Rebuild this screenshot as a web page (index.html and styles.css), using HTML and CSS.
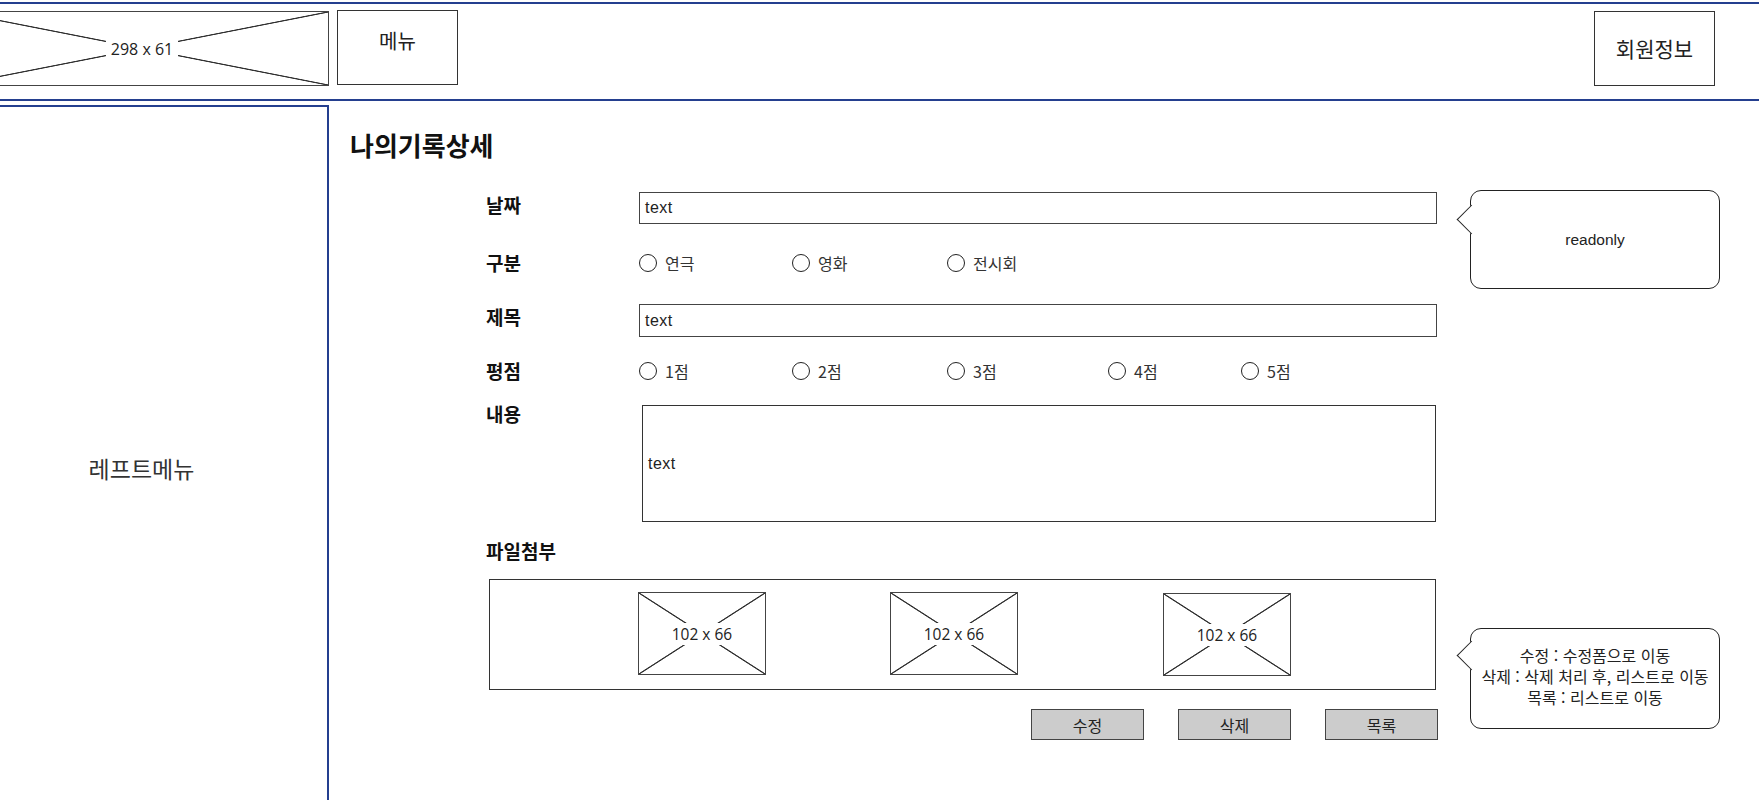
FILE: index.html
```html
<!DOCTYPE html>
<html lang="ko">
<head>
<meta charset="utf-8">
<title>나의기록상세</title>
<link rel="stylesheet" href="styles.css">
</head>
<body>
<header class="topbar">
  <div class="ph logo"><span>298 x 61</span></div>
  <div class="box nav-box">메뉴</div>
  <div class="box user-box">회원정보</div>
</header>
<div class="layout">
  <aside class="sidebar">레프트메뉴</aside>
  <main class="content">
    <section class="form-col">
      <h1 class="title">나의기록상세</h1>
      <div class="form">
        <div class="row row-input">
          <div class="label">날짜</div>
          <div class="field">text</div>
        </div>
        <div class="row row-radio gap-26 cat">
          <div class="label">구분</div>
          <label class="radio"><i></i>연극</label>
          <label class="radio"><i></i>영화</label>
          <label class="radio"><i></i>전시회</label>
        </div>
        <div class="row row-input gap-28">
          <div class="label">제목</div>
          <div class="field field-33">text</div>
        </div>
        <div class="row row-radio gap-21 score">
          <div class="label">평점</div>
          <label class="radio"><i></i>1점</label>
          <label class="radio"><i></i>2점</label>
          <label class="radio"><i></i>3점</label>
          <label class="radio"><i></i>4점</label>
          <label class="radio"><i></i>5점</label>
        </div>
        <div class="row row-input gap-21">
          <div class="label label-up">내용</div>
          <div class="area">text</div>
        </div>
        <div class="label file-label">파일첨부</div>
        <div class="filebox">
          <div class="ph thumb"><span>102 x 66</span></div>
          <div class="ph thumb"><span>102 x 66</span></div>
          <div class="ph thumb thumb-wide"><span>102 x 66</span></div>
        </div>
        <div class="actions">
          <button class="btn">수정</button>
          <button class="btn">삭제</button>
          <button class="btn">목록</button>
        </div>
      </div>
    </section>
    <aside class="notes">
      <div class="bubble bubble-top">readonly</div>
      <div class="bubble bubble-bottom">수정 : 수정폼으로 이동<br>삭제 : 삭제 처리 후, 리스트로 이동<br>목록 : 리스트로 이동</div>
    </aside>
  </main>
</div>
</body>
</html>
```
FILE: styles.css
```css
* { box-sizing: border-box; }
html, body { overflow: hidden; }
body {
  margin: 0;
  width: 1759px;
  height: 800px;
  background: #fff;
  color: #222;
  font-family: "Noto Sans CJK KR", "Noto Sans", sans-serif;
}

/* header */
.topbar {
  margin-top: 2px;
  height: 99px;
  border-top: 2px solid #243f8f;
  border-bottom: 2px solid #243f8f;
  display: flex;
  align-items: flex-start;
}
.box {
  border: 1.5px solid #333;
  display: flex;
  align-items: center;
  justify-content: center;
  background: #fff;
}
.logo {
  margin-left: -45px;
  margin-top: 7px;
  width: 374px;
  height: 75px;
  font-size: 16px;
}
.nav-box {
  margin-left: 8px;
  margin-top: 6px;
  width: 121px;
  height: 75px;
  font-size: 20px;
  padding-bottom: 14px;
}
.user-box {
  margin-left: auto;
  margin-right: 44px;
  margin-top: 7px;
  width: 121px;
  height: 75px;
  font-size: 21px;
  padding-bottom: 2px;
}

/* placeholders */
.ph {
  border: 1.5px solid #444;
  display: flex;
  align-items: center;
  justify-content: center;
  background:
    linear-gradient(to top right, transparent calc(50% - 1px), #333 calc(50% - 0.3px), #333 calc(50% + 0.3px), transparent calc(50% + 1px)),
    linear-gradient(to bottom right, transparent calc(50% - 1px), #333 calc(50% - 0.3px), #333 calc(50% + 0.3px), transparent calc(50% + 1px)),
    #fff;
  color: #222;
  font-family: "Open Sans", "Noto Sans", sans-serif;
}
.ph span {
  background: #fff;
  padding: 3px 5px;
  line-height: 16px;
}

/* layout */
.layout {
  display: flex;
  margin-top: 4px;
}
.sidebar {
  flex: none;
  margin-left: -46px;
  width: 375px;
  height: 726px;
  border: 2px solid #243f8f;
  display: flex;
  align-items: center;
  justify-content: center;
  font-size: 23px;
  color: #333;
}
.content {
  display: flex;
  padding-left: 21px;
}
.form-col {
  width: 1088px;
  flex: none;
}
.title {
  margin: 25px 0 0;
  font-size: 26px;
  line-height: 30px;
  font-weight: 700;
  color: #111;
}

/* form */
.form {
  margin-left: 136px;
  margin-top: 32px;
  width: 952px;
}
.row {
  display: grid;
  grid-template-columns: 153px 1fr;
}
.row-input { align-items: start; }
.row-radio { align-items: center; height: 26px; }
.cat { grid-template-columns: 153px 153px 155px auto; }
.score { grid-template-columns: 153px 153px 155px 161px 133px auto; }
.gap-21 { margin-top: 21px; }
.gap-26 { margin-top: 26px; }
.gap-28 { margin-top: 28px; }

.label {
  font-size: 19px;
  font-weight: 700;
  line-height: 26px;
  color: #111;
}
.row-input .label { padding-top: 0; }
.row-input .label-up { margin-top: -4px; }

.field {
  width: 798px;
  height: 32px;
  border: 1.5px solid #444;
  display: flex;
  align-items: center;
  padding-left: 5px;
  font-family: "Liberation Sans", sans-serif;
  font-size: 16px;
  letter-spacing: 0.5px;
}
.field-33 { height: 33px; }
.area {
  margin-left: 3px;
  width: 794px;
  height: 117px;
  border: 1.5px solid #333;
  display: flex;
  align-items: center;
  padding-left: 5px;
  font-family: "Liberation Sans", sans-serif;
  font-size: 16px;
  letter-spacing: 0.5px;
}

.radio {
  display: flex;
  align-items: center;
  gap: 8px;
  font-size: 16px;
  color: #333;
}
.radio i {
  width: 18px;
  height: 18px;
  border: 1.5px solid #222;
  border-radius: 50%;
  display: block;
}

.file-label { margin-top: 16px; }
.filebox {
  margin-top: 15px;
  margin-left: 3px;
  width: 947px;
  height: 111px;
  border: 1.5px solid #333;
  display: flex;
  align-items: flex-start;
  padding: 12px 0 0 148px;
  gap: 124px;
}
.thumb {
  width: 128px;
  height: 83px;
  font-size: 15.5px;
}
.thumb-wide { margin-left: 21px; margin-top: 1px; }

.actions {
  margin-top: 19px;
  display: flex;
  justify-content: flex-end;
  gap: 34px;
}
.btn {
  width: 113px;
  height: 31px;
  background: #ccc;
  border: 1.5px solid #444;
  font-family: "Noto Sans CJK KR", "Noto Sans", sans-serif;
  font-size: 16px;
  color: #222;
  padding: 0;
}

/* notes */
.notes {
  margin-left: 32px;
  width: 250px;
  flex: none;
  padding-top: 85px;
}
.bubble {
  position: relative;
  background: #fff;
  border: 1.5px solid #222;
  border-radius: 11px;
  display: flex;
  align-items: center;
  justify-content: center;
  text-align: center;
  font-size: 16px;
  color: #222;
}
.bubble::before {
  content: "";
  position: absolute;
  left: -10px;
  width: 20px;
  height: 20px;
  background: #fff;
  border-left: 1.5px solid #222;
  border-bottom: 1.5px solid #222;
  transform: rotate(45deg);
}
.bubble-top {
  height: 99px;
  font-family: "Liberation Sans", sans-serif;
  font-size: 15.5px;
}
.bubble-top::before { top: 18px; }
.bubble-bottom {
  margin-top: 339px;
  height: 101px;
  line-height: 21px;
  padding-bottom: 4px;
}
.bubble-bottom::before { top: 16px; }
```
